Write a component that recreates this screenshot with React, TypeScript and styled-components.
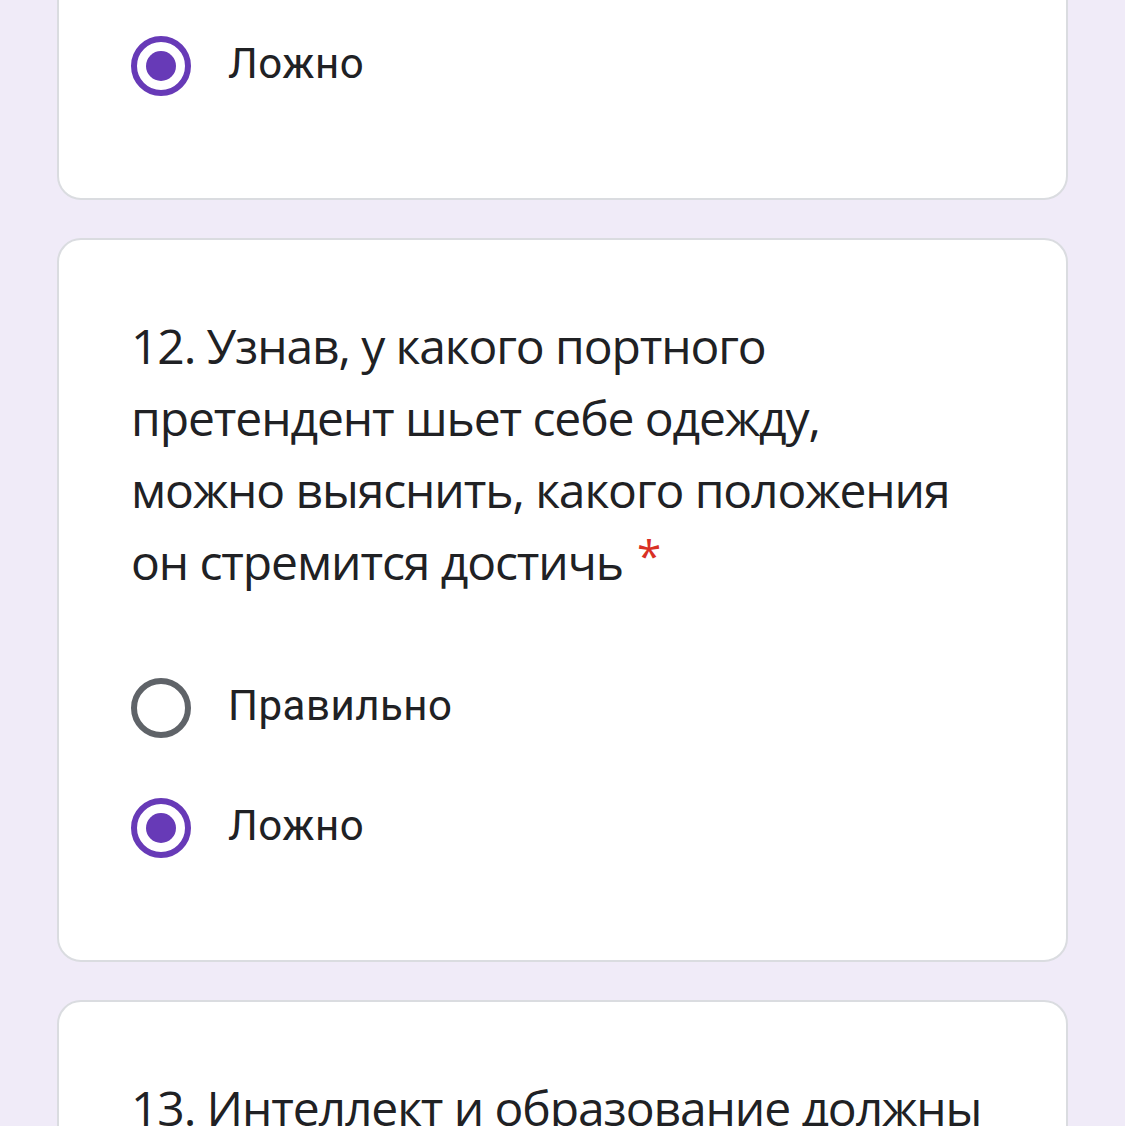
import styled, { createGlobalStyle } from 'styled-components';

const GlobalStyle = createGlobalStyle`
  html, body {
    margin: 0;
    padding: 0;
    background: #f0ebf8;
    overflow: hidden;
  }
`;

const Page = styled.main`
  display: flex;
  flex-direction: column;
  gap: 38px;
  padding: 0 57px;
  margin-top: -68px;
  height: 1196px;
  overflow: hidden;
`;

const Card = styled.section<{ $tall?: boolean }>`
  background: #fff;
  border: 2px solid #dadce0;
  border-radius: 24px;
  padding: 72px;
  flex-shrink: 0;
  min-height: ${(p) => (p.$tall ? '400px' : 'auto')};
`;

const Title = styled.div`
  font-family: 'Open Sans', 'Noto Sans', sans-serif;
  font-size: 48px;
  line-height: 72px;
  letter-spacing: -1.1px;
  color: #202124;
  margin-top: -2px;
  margin-bottom: 50px;
  white-space: nowrap;
`;

const Required = styled.span`
  color: #d93025;
  margin-left: 14px;
  font-size: 44px;
  line-height: 0;
  vertical-align: 8px;
`;

const Options = styled.div`
  display: flex;
  flex-direction: column;
`;

const OptionRow = styled.label`
  display: flex;
  align-items: center;
  height: 120px;
  gap: 37px;
`;

const Radio = styled.span<{ $checked?: boolean }>`
  box-sizing: border-box;
  width: 60px;
  height: 60px;
  border-radius: 50%;
  border: 6px solid ${(p) => (p.$checked ? '#673ab7' : '#5f6368')};
  display: flex;
  align-items: center;
  justify-content: center;

  &::after {
    content: '';
    display: ${(p) => (p.$checked ? 'block' : 'none')};
    width: 30px;
    height: 30px;
    border-radius: 50%;
    background: #673ab7;
  }
`;

const OptionText = styled.span`
  font-family: Roboto, 'Liberation Sans', sans-serif;
  font-size: 42px;
  letter-spacing: 0.5px;
  color: #202124;
  margin-top: -6px;
`;

type Opt = { label: string; checked?: boolean };

function Option({ label, checked }: Opt) {
  return (
    <OptionRow>
      <Radio $checked={checked} />
      <OptionText>{label}</OptionText>
    </OptionRow>
  );
}

export default function App() {
  return (
    <>
      <GlobalStyle />
      <Page>
        <Card>
          <Options>
            <Option label="Ложно" checked />
          </Options>
        </Card>
        <Card>
          <Title>
            12. Узнав, у какого портного
            <br />
            претендент шьет себе одежду,
            <br />
            можно выяснить, какого положения
            <br />
            он стремится достичь<Required>*</Required>
          </Title>
          <Options>
            <Option label="Правильно" />
            <Option label="Ложно" checked />
          </Options>
        </Card>
        <Card $tall>
          <Title>13. Интеллект и образование должны</Title>
        </Card>
      </Page>
    </>
  );
}
